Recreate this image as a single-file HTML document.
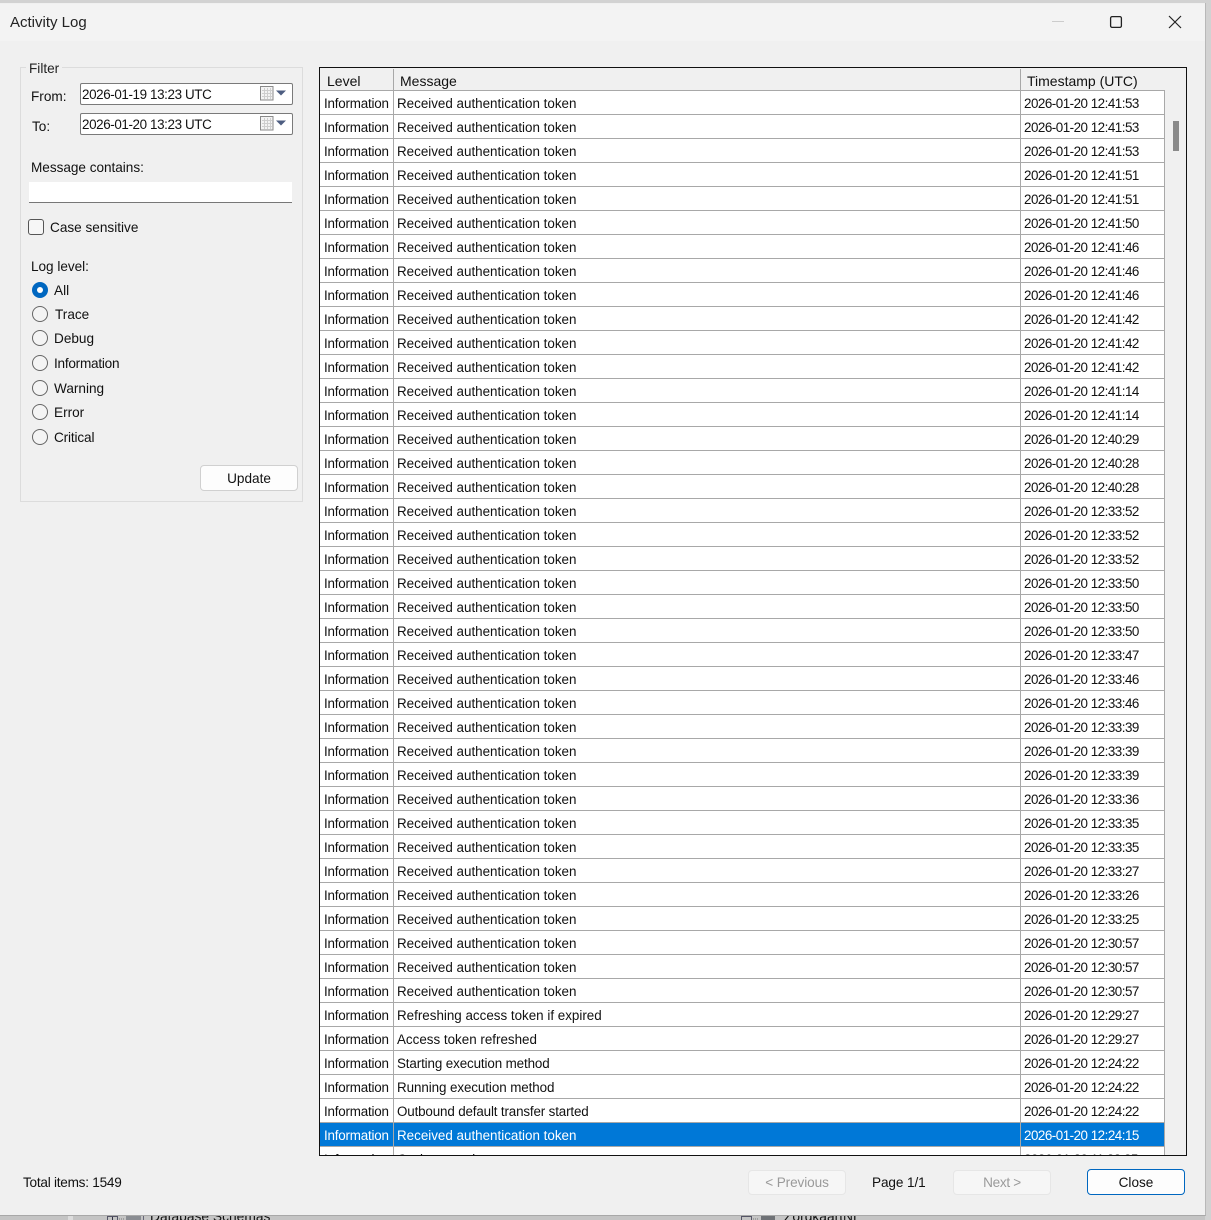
<!DOCTYPE html>
<html><head><meta charset="utf-8"><style>
html,body{margin:0;padding:0;width:1211px;height:1220px;overflow:hidden;background:#d2d2d2;font-family:"Liberation Sans",sans-serif;color:#111}
.a{position:absolute;white-space:nowrap}
#win{position:absolute;left:0;top:3px;width:1205px;height:1212px;background:#f0f0f0;border-right:1px solid #b8b8b8;border-bottom:1px solid #a8a8a8}
#title{position:absolute;left:0;top:4px;width:1205px;height:37px;background:#f3f3f3}
.t{font-size:13.6px;line-height:18px;margin-top:1px}
.d{font-size:13.4px;letter-spacing:-.38px}
#grid{position:absolute;left:319px;top:67px;width:866px;height:1087px;border:1px solid #111;background:#f0f0f0;overflow:hidden}
#head{position:absolute;left:0;top:0;width:845px;height:22px;background:#f0f0f0;border-bottom:1px solid #a8a8a8;font-size:14px;line-height:27px}
#head span{position:absolute;top:0}
#rows{position:absolute;left:0;top:23px;width:845px;background:#fff}
.r{position:relative;height:23px;border-bottom:1px solid #a8a8a8;font-size:13.4px;line-height:25px;white-space:nowrap;border-right:1px solid #a8a8a8}
.r i{font-style:normal;position:absolute;top:0;height:23px}
.r i:nth-child(1){left:4px;width:69px;letter-spacing:-.2px}
.r i:nth-child(2){left:73px;width:623px;padding-left:3px;border-left:1px solid #a8a8a8}
.r i:nth-child(3){left:700px;padding-left:3px;border-left:1px solid #a8a8a8;letter-spacing:-.5px}
.s{background:#0078d7;color:#fff}
.btn{position:absolute;box-sizing:border-box;border-radius:4px;text-align:center;font-size:13.6px}
.rd{position:absolute;left:32px;width:14px;height:14px;border:1px solid #666;border-radius:50%;background:#f4f4f4}
.dp{position:absolute;left:80px;width:211px;height:20px;background:#fff;border:1px solid #7a7a7a;border-radius:2px}
</style></head><body>
<div id="win"></div><div id="title"></div>
<div class="a" style="left:10px;top:13px;font-size:15px;line-height:20px;color:#222">Activity Log</div>
<svg class="a" style="left:1040px;top:10px" width="150" height="24"><path d="M12 11.5H24" stroke="#ccc"/><rect x="70.6" y="6.6" width="10.8" height="10.8" rx="1.5" fill="none" stroke="#222" stroke-width="1.3"/><path d="M129 6L141 18M141 6L129 18" stroke="#222" stroke-width="1.2"/></svg>

<div class="a" style="left:20px;top:67px;width:281px;height:433px;border:1px solid #dcdcdc"></div>
<div class="a t" style="left:26px;top:59px;padding:0 3px;background:#f0f0f0;color:#222">Filter</div>
<div class="a t" style="left:31px;top:87px">From:</div>
<div class="a t" style="left:32px;top:117px">To:</div>
<div class="dp" style="top:83px"></div><div class="dp" style="top:113px"></div>
<div class="a t d" style="left:82px;top:85px">2026-01-19 13:23 UTC</div>
<div class="a t d" style="left:82px;top:115px">2026-01-20 13:23 UTC</div>
<svg class="a" style="left:259px;top:85px" width="30" height="18"><rect x="1.5" y="1.5" width="12.5" height="13.5" fill="#f4f4f4" stroke="#8a8a8a"/><path d="M3 5.5H13M3 8.5H13M3 11.5H13M5.5 3V14M8.5 3V14M11.5 3V14" stroke="#cfcfcf"/><path d="M17 5.5H27L22 10.5Z" fill="#4d5d80"/></svg>
<svg class="a" style="left:259px;top:115px" width="30" height="18"><rect x="1.5" y="1.5" width="12.5" height="13.5" fill="#f4f4f4" stroke="#8a8a8a"/><path d="M3 5.5H13M3 8.5H13M3 11.5H13M5.5 3V14M8.5 3V14M11.5 3V14" stroke="#cfcfcf"/><path d="M17 5.5H27L22 10.5Z" fill="#4d5d80"/></svg>
<div class="a t" style="left:31px;top:158px;letter-spacing:-.03px">Message contains:</div>
<div class="a" style="left:29px;top:182px;width:263px;height:20px;background:#fff;border-bottom:1px solid #777"></div>
<div class="a" style="left:28px;top:219px;width:14px;height:14px;border:1px solid #555;border-radius:3px;background:#f6f6f6"></div>
<div class="a t" style="left:50px;top:218px">Case sensitive</div>
<div class="a t" style="left:31px;top:257px;letter-spacing:-.03px">Log level:</div>
<div class="a" style="left:32px;top:282px;width:16px;height:16px;border-radius:50%;background:#0067c0"></div>
<div class="a" style="left:37px;top:287px;width:6px;height:6px;border-radius:50%;background:#fff"></div>
<div class="rd" style="top:306px"></div><div class="rd" style="top:330px"></div><div class="rd" style="top:355px"></div><div class="rd" style="top:380px"></div><div class="rd" style="top:404px"></div><div class="rd" style="top:429px"></div>
<div class="a t" style="left:54px;top:281px">All</div>
<div class="a t" style="left:55px;top:305px">Trace</div>
<div class="a t" style="left:54px;top:329px">Debug</div>
<div class="a t" style="left:54px;top:354px;letter-spacing:-.25px">Information</div>
<div class="a t" style="left:54px;top:379px">Warning</div>
<div class="a t" style="left:54px;top:403px">Error</div>
<div class="a t" style="left:54px;top:428px;letter-spacing:-.15px">Critical</div>
<div class="btn" style="left:200px;top:465px;width:98px;height:26px;background:#fdfdfd;border:1px solid #d0d0d0;line-height:25px">Update</div>

<div id="grid">
<div id="head"><span style="left:7px">Level</span><span style="left:73px;width:1px;height:21px;background:#a8a8a8;top:1px"></span><span style="left:80px">Message</span><span style="left:700px;width:1px;height:21px;background:#a8a8a8;top:1px"></span><span style="left:707px">Timestamp (UTC)</span></div>
<div id="rows">
<div class="r"><i>Information</i><i>Received authentication token</i><i>2026-01-20 12:41:53</i></div>
<div class="r"><i>Information</i><i>Received authentication token</i><i>2026-01-20 12:41:53</i></div>
<div class="r"><i>Information</i><i>Received authentication token</i><i>2026-01-20 12:41:53</i></div>
<div class="r"><i>Information</i><i>Received authentication token</i><i>2026-01-20 12:41:51</i></div>
<div class="r"><i>Information</i><i>Received authentication token</i><i>2026-01-20 12:41:51</i></div>
<div class="r"><i>Information</i><i>Received authentication token</i><i>2026-01-20 12:41:50</i></div>
<div class="r"><i>Information</i><i>Received authentication token</i><i>2026-01-20 12:41:46</i></div>
<div class="r"><i>Information</i><i>Received authentication token</i><i>2026-01-20 12:41:46</i></div>
<div class="r"><i>Information</i><i>Received authentication token</i><i>2026-01-20 12:41:46</i></div>
<div class="r"><i>Information</i><i>Received authentication token</i><i>2026-01-20 12:41:42</i></div>
<div class="r"><i>Information</i><i>Received authentication token</i><i>2026-01-20 12:41:42</i></div>
<div class="r"><i>Information</i><i>Received authentication token</i><i>2026-01-20 12:41:42</i></div>
<div class="r"><i>Information</i><i>Received authentication token</i><i>2026-01-20 12:41:14</i></div>
<div class="r"><i>Information</i><i>Received authentication token</i><i>2026-01-20 12:41:14</i></div>
<div class="r"><i>Information</i><i>Received authentication token</i><i>2026-01-20 12:40:29</i></div>
<div class="r"><i>Information</i><i>Received authentication token</i><i>2026-01-20 12:40:28</i></div>
<div class="r"><i>Information</i><i>Received authentication token</i><i>2026-01-20 12:40:28</i></div>
<div class="r"><i>Information</i><i>Received authentication token</i><i>2026-01-20 12:33:52</i></div>
<div class="r"><i>Information</i><i>Received authentication token</i><i>2026-01-20 12:33:52</i></div>
<div class="r"><i>Information</i><i>Received authentication token</i><i>2026-01-20 12:33:52</i></div>
<div class="r"><i>Information</i><i>Received authentication token</i><i>2026-01-20 12:33:50</i></div>
<div class="r"><i>Information</i><i>Received authentication token</i><i>2026-01-20 12:33:50</i></div>
<div class="r"><i>Information</i><i>Received authentication token</i><i>2026-01-20 12:33:50</i></div>
<div class="r"><i>Information</i><i>Received authentication token</i><i>2026-01-20 12:33:47</i></div>
<div class="r"><i>Information</i><i>Received authentication token</i><i>2026-01-20 12:33:46</i></div>
<div class="r"><i>Information</i><i>Received authentication token</i><i>2026-01-20 12:33:46</i></div>
<div class="r"><i>Information</i><i>Received authentication token</i><i>2026-01-20 12:33:39</i></div>
<div class="r"><i>Information</i><i>Received authentication token</i><i>2026-01-20 12:33:39</i></div>
<div class="r"><i>Information</i><i>Received authentication token</i><i>2026-01-20 12:33:39</i></div>
<div class="r"><i>Information</i><i>Received authentication token</i><i>2026-01-20 12:33:36</i></div>
<div class="r"><i>Information</i><i>Received authentication token</i><i>2026-01-20 12:33:35</i></div>
<div class="r"><i>Information</i><i>Received authentication token</i><i>2026-01-20 12:33:35</i></div>
<div class="r"><i>Information</i><i>Received authentication token</i><i>2026-01-20 12:33:27</i></div>
<div class="r"><i>Information</i><i>Received authentication token</i><i>2026-01-20 12:33:26</i></div>
<div class="r"><i>Information</i><i>Received authentication token</i><i>2026-01-20 12:33:25</i></div>
<div class="r"><i>Information</i><i>Received authentication token</i><i>2026-01-20 12:30:57</i></div>
<div class="r"><i>Information</i><i>Received authentication token</i><i>2026-01-20 12:30:57</i></div>
<div class="r"><i>Information</i><i>Received authentication token</i><i>2026-01-20 12:30:57</i></div>
<div class="r"><i>Information</i><i>Refreshing access token if expired</i><i>2026-01-20 12:29:27</i></div>
<div class="r"><i>Information</i><i>Access token refreshed</i><i>2026-01-20 12:29:27</i></div>
<div class="r"><i>Information</i><i style="letter-spacing:-.12px">Starting execution method</i><i>2026-01-20 12:24:22</i></div>
<div class="r"><i>Information</i><i style="letter-spacing:-.08px">Running execution method</i><i>2026-01-20 12:24:22</i></div>
<div class="r"><i>Information</i><i style="letter-spacing:-.15px">Outbound default transfer started</i><i>2026-01-20 12:24:22</i></div>
<div class="r s"><i>Information</i><i>Received authentication token</i><i>2026-01-20 12:24:15</i></div>
<div class="r"><i>Information</i><i>Cycle started</i><i>2026-01-20 11:33:35</i></div>
</div>
</div>
<div class="a" style="left:1173px;top:121px;width:6px;height:30px;background:#8a8a8a"></div>

<div class="a t" style="left:23px;top:1173px;letter-spacing:-.25px">Total items: 1549</div>
<div class="btn" style="left:748px;top:1170px;width:98px;height:25px;background:#f6f6f6;border:1px solid #e6e6e6;color:#9a9a9a;line-height:24px;letter-spacing:-.1px">&lt; Previous</div>
<div class="a t" style="left:872px;top:1173px;letter-spacing:-.1px">Page 1/1</div>
<div class="btn" style="left:953px;top:1170px;width:98px;height:25px;background:#f6f6f6;border:1px solid #e6e6e6;color:#9a9a9a;line-height:24px;letter-spacing:-.3px">Next &gt;</div>
<div class="btn" style="left:1087px;top:1169px;width:98px;height:26px;background:#fdfdfd;border:1px solid #0067c0;line-height:25px">Close</div>

<div class="a" style="left:0;top:1216px;width:1205px;height:4px;background:#c4c4c4;overflow:hidden"></div>
<div class="a" style="left:68px;top:1216px;width:5px;height:4px;background:#dcdcdc"></div>
<div class="a" style="left:150px;top:1209px;height:11px;overflow:hidden;font-size:13.8px;line-height:16px;clip-path:inset(7px 0 0 0)">Database Schemas</div>
<div class="a" style="left:784px;top:1209px;height:11px;overflow:hidden;font-size:13.8px;line-height:16px;clip-path:inset(7px 0 0 0)">ZorgkaartNL</div>
<svg class="a" style="left:104px;top:1216px" width="42" height="4"><rect x="3.5" y=".5" width="10" height="6" fill="none" stroke="#556"/><path d="M8.5 1V4" stroke="#334"/><path d="M15 3H20" stroke="#777" stroke-dasharray="1 1"/><rect x="22" y="0" width="15" height="4" fill="#8a8d92"/><path d="M39.5 0V4" stroke="#667"/></svg>
<svg class="a" style="left:738px;top:1216px" width="40" height="4"><rect x="3.5" y=".5" width="10" height="6" fill="none" stroke="#556"/><path d="M15 3H20" stroke="#777" stroke-dasharray="1 1"/><rect x="23" y="0" width="14" height="4" fill="#6f7276"/></svg>
</body></html>
